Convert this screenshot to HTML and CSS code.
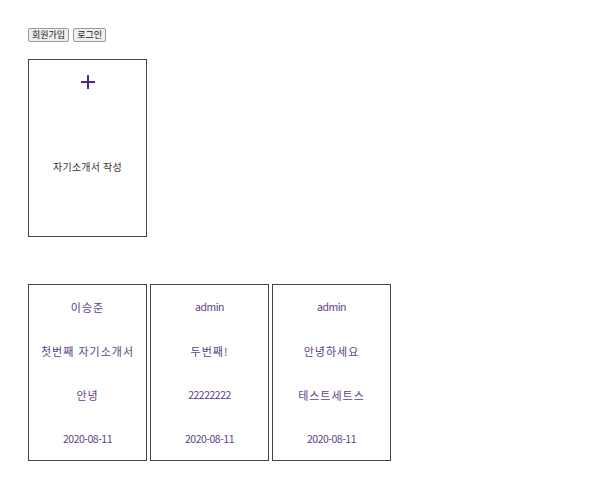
FILE: index.html
```html
<!DOCTYPE html>
<html lang="ko">
<head>
<meta charset="utf-8">
<link rel="stylesheet" href="styles.css">
</head>
<body>
<div class="page">
  <div class="auth">
    <button class="btn">회원가입</button>
    <button class="btn">로그인</button>
  </div>
  <div class="write-card">
    <svg class="plus" width="16" height="16" viewBox="0 0 16 16"><path d="M8 1v14M1 8h14" stroke="#4b2a7e" stroke-width="2"/></svg>
    <div class="write-label">자기소개서 작성</div>
  </div>
  <div class="list">
    <div class="card">
      <div class="line">이승준</div>
      <div class="line">첫번째 자기소개서</div>
      <div class="line">안녕</div>
      <div class="line en">2020-08-11</div>
    </div>
    <div class="card">
      <div class="line en">admin</div>
      <div class="line">두번째!</div>
      <div class="line en">22222222</div>
      <div class="line en">2020-08-11</div>
    </div>
    <div class="card">
      <div class="line en">admin</div>
      <div class="line">안녕하세요</div>
      <div class="line">테스트세트스</div>
      <div class="line en">2020-08-11</div>
    </div>
  </div>
</div>
</body>
</html>
```
FILE: styles.css
```css
html, body {
  margin: 0;
  background: #ffffff;
}
.page {
  padding: 28px 0 0 28px;
  font-family: "Noto Sans CJK KR", "Noto Sans", sans-serif;
  font-size: 11px;
}
.auth {
  display: flex;
  gap: 4px;
  height: 14px;
}
.btn {
  margin: 0;
  padding: 0 3px;
  height: 14px;
  font-family: "Noto Sans CJK KR", sans-serif;
  font-size: 9px;
  line-height: 12px;
  color: #222;
  background: #efefef;
  border: 1px solid #9a9a9a;
  border-radius: 2px;
}
.write-card {
  box-sizing: border-box;
  margin-top: 17px;
  width: 119px;
  height: 178px;
  border: 1px solid #444;
  display: flex;
  flex-direction: column;
  align-items: center;
}
.plus {
  margin-top: 14px;
}
.write-label {
  margin-top: 69px;
  font-size: 10px;
  letter-spacing: 0.2px;
  line-height: 16px;
  color: #333;
}
.list {
  display: flex;
  gap: 3px;
  margin-top: 47px;
}
.card {
  box-sizing: border-box;
  width: 119px;
  height: 177px;
  border: 1px solid #444;
  display: flex;
  flex-direction: column;
  align-items: center;
  padding-top: 14px;
  gap: 28px;
  color: #5e4289;
}
.line {
  font-size: 11px;
  letter-spacing: 1px;
  line-height: 16px;
}
.line.en {
  font-size: 10.5px;
  letter-spacing: -0.5px;
}
```
